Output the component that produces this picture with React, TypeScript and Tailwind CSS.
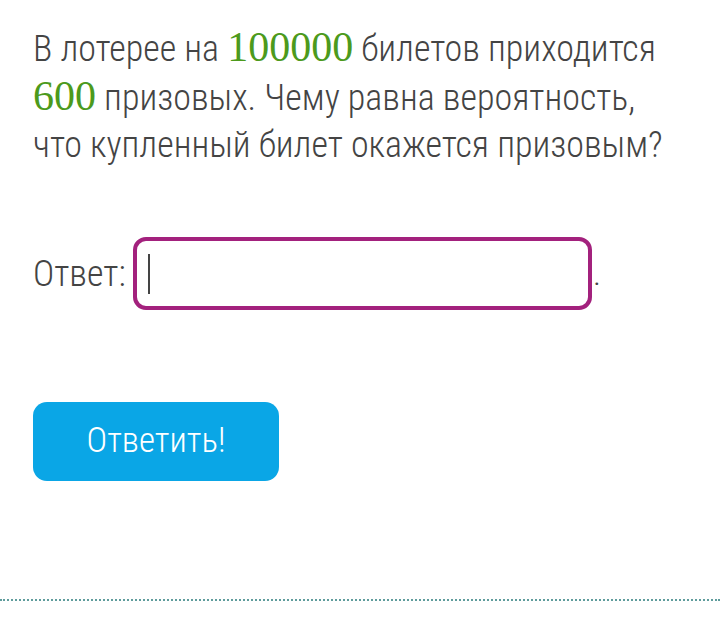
export default function App() {
  return (
    <div className="w-[720px] h-[640px] bg-white overflow-hidden font-['Roboto',sans-serif] font-light text-[#444]">
      <div className="pl-[33px] pt-[24px]">
        <p className="text-[36px] leading-[47px] [font-stretch:condensed]">
          В лотерее на{' '}
          <span className="font-['Liberation_Serif',serif] font-normal text-[#4c9a1c] text-[42px]">100000</span>{' '}
          билетов приходится
          <br />
          <span className="font-['Liberation_Serif',serif] font-normal text-[#4c9a1c] text-[42px]">600</span>{' '}
          призовых. Чему равна вероятность,
          <br />
          что купленный билет окажется призовым?
        </p>
        <div className="mt-[68px] flex items-center">
          <span className="text-[36px] [font-stretch:condensed]">Ответ:</span>
          <div className="ml-[7px] w-[459px] h-[73px] border-[4px] border-[#a3217d] rounded-[13px] flex items-center pl-[11px]">
            <div className="w-[2px] h-[40px] bg-[#444]" />
          </div>
          <span className="self-end mb-[21px] ml-[2px] text-[24px] font-normal leading-none">.</span>
        </div>
        <button className="mt-[92px] w-[246px] h-[79px] rounded-[14px] bg-[#0aa6e6] text-white text-[35px] font-light [font-stretch:condensed]">
          Ответить!
        </button>
      </div>
      <div className="mt-[118px] border-t-2 border-dotted border-[#5f9c9c]" />
    </div>
  );
}
